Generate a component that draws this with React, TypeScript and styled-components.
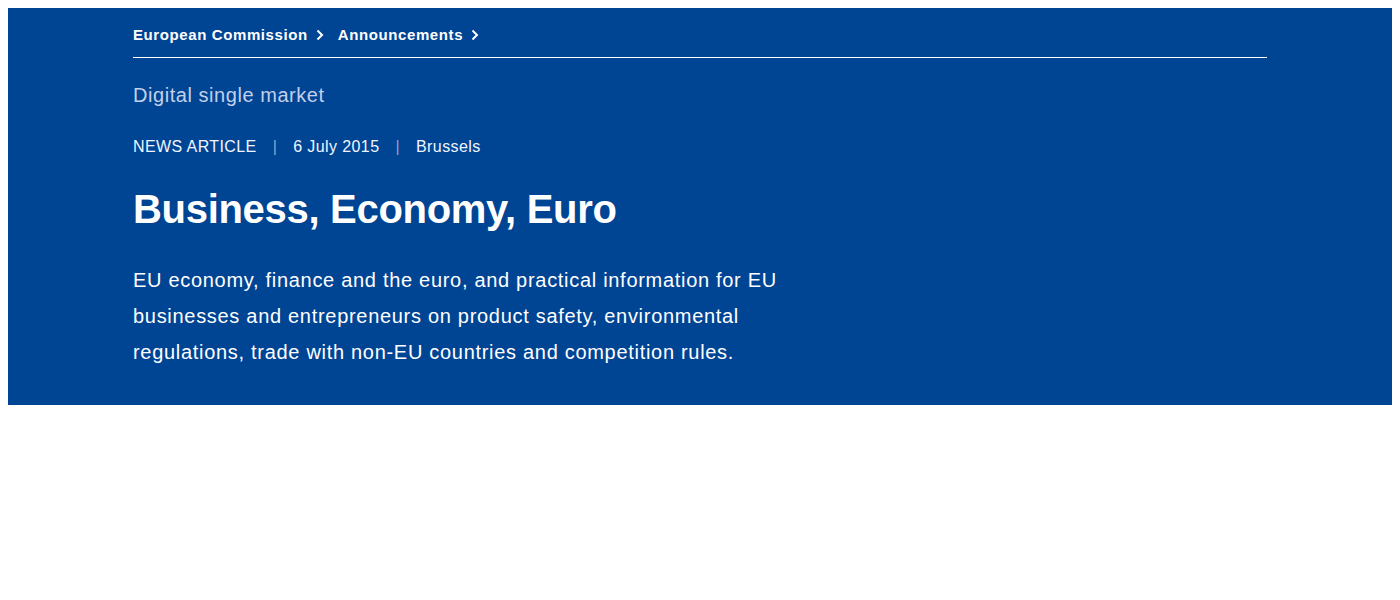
import React from "react";
import styled, { createGlobalStyle } from "styled-components";

const Global = createGlobalStyle`
  body { margin: 8px; font-family: "Liberation Sans", Arial, sans-serif; background: #fff; }
`;

const Banner = styled.header`
  background: #004494;
  color: #fff;
  padding: 0 125px 35px;
`;

const Breadcrumb = styled.nav`
  display: flex;
  align-items: center;
  gap: 14px;
  padding: 16px 0 11px;
  border-bottom: 1px solid #fff;
`;

const Crumb = styled.a`
  display: flex;
  align-items: center;
  gap: 8px;
  font-size: 15px;
  line-height: 22px;
  font-weight: 700;
  letter-spacing: 0.6px;
  color: #fff;
  text-decoration: none;
`;

const Site = styled.div`
  margin-top: 25px;
  font-size: 20px;
  line-height: 24px;
  letter-spacing: 0.55px;
  color: #c3d0ea;
`;

const Meta = styled.div`
  margin-top: 30px;
  display: flex;
  align-items: center;
  font-size: 16px;
  line-height: 20px;
  letter-spacing: 0.4px;
  color: #f0f6ff;
`;

const Sep = styled.span`
  color: #8fa3cc;
  margin: 0 16px;
`;

const Title = styled.h1`
  margin: 28px 0 0;
  font-size: 40px;
  line-height: 48px;
  font-weight: 700;
  letter-spacing: -0.3px;
`;

const Lead = styled.p`
  margin: 29px 0 0;
  max-width: 680px;
  font-size: 20px;
  line-height: 36px;
  letter-spacing: 0.7px;
`;

const Chevron = () => (
  <svg width="8" height="12" viewBox="0 0 8 12" fill="none">
    <path d="M1.5 1.5 L6 6 L1.5 10.5" stroke="#fff" strokeWidth="2" />
  </svg>
);

export default function App() {
  return (
    <>
      <Global />
      <Banner>
        <Breadcrumb>
          <Crumb href="#">European Commission <Chevron /></Crumb>
          <Crumb href="#">Announcements <Chevron /></Crumb>
        </Breadcrumb>
        <Site>Digital single market</Site>
        <Meta>
          <span>NEWS ARTICLE</span>
          <Sep>|</Sep>
          <span>6 July 2015</span>
          <Sep>|</Sep>
          <span>Brussels</span>
        </Meta>
        <Title>Business, Economy, Euro</Title>
        <Lead>
          EU economy, finance and the euro, and practical information for EU
          businesses and entrepreneurs on product safety, environmental
          regulations, trade with non-EU countries and competition rules.
        </Lead>
      </Banner>
    </>
  );
}
